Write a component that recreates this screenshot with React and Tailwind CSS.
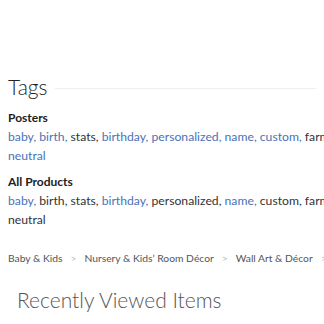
const tagsA = [
  ['baby', true],
  ['birth', true],
  ['stats', false],
  ['birthday', true],
  ['personalized', true],
  ['name', true],
  ['custom', true],
  ['farm', false],
  ['neutral', true],
]

const tagsB = [
  ['baby', true],
  ['birth', false],
  ['stats', false],
  ['birthday', true],
  ['personalized', false],
  ['name', true],
  ['custom', false],
  ['farm', false],
  ['neutral', false],
]

function TagList({ tags }) {
  return (
    <p className="mt-[1px] text-[12.2px] leading-[19px] text-[#333] w-[345px]">
      {tags.map(([t, link], i) => (
        <span key={t} className={link ? 'text-[#4a72b8]' : ''}>
          {t}
          {i < tags.length - 1 ? ', ' : ''}
        </span>
      ))}
    </p>
  )
}

const crumbs = ['Baby & Kids', 'Nursery & Kids\u2019 Room D\u00e9cor', 'Wall Art & D\u00e9cor', 'Posters']

export default function App() {
  return (
    <div className="w-[324px] h-[324px] overflow-hidden bg-white font-['Lato',sans-serif]">
      <div className="pt-[74px] px-2">
        <div className="flex items-center gap-2">
          <h2 className="text-[21px] leading-[26px] font-light text-[#222] shrink-0">Tags</h2>
          <div className="flex-1 h-px bg-[#eee] mt-[2px]" />
        </div>
        <h3 className="mt-[10px] text-[12px] leading-[16px] font-bold text-[#222]">Posters</h3>
        <TagList tags={tagsA} />
        <h3 className="mt-[9px] text-[12px] leading-[16px] font-bold text-[#222]">All Products</h3>
        <TagList tags={tagsB} />
        <nav className="mt-[22px] flex items-center gap-[8px] text-[10.3px] text-[#555] whitespace-nowrap">
          {crumbs.map((c, i) => (
            <span key={c} className="flex items-center gap-[8px]">
              {c}
              {i < crumbs.length - 1 && <span className="text-[#bbb]">&gt;</span>}
            </span>
          ))}
        </nav>
      </div>
      <h2 className="mt-[21px] pl-[17px] text-[21px] leading-[26px] font-light text-[#555]">Recently Viewed Items</h2>
    </div>
  )
}
